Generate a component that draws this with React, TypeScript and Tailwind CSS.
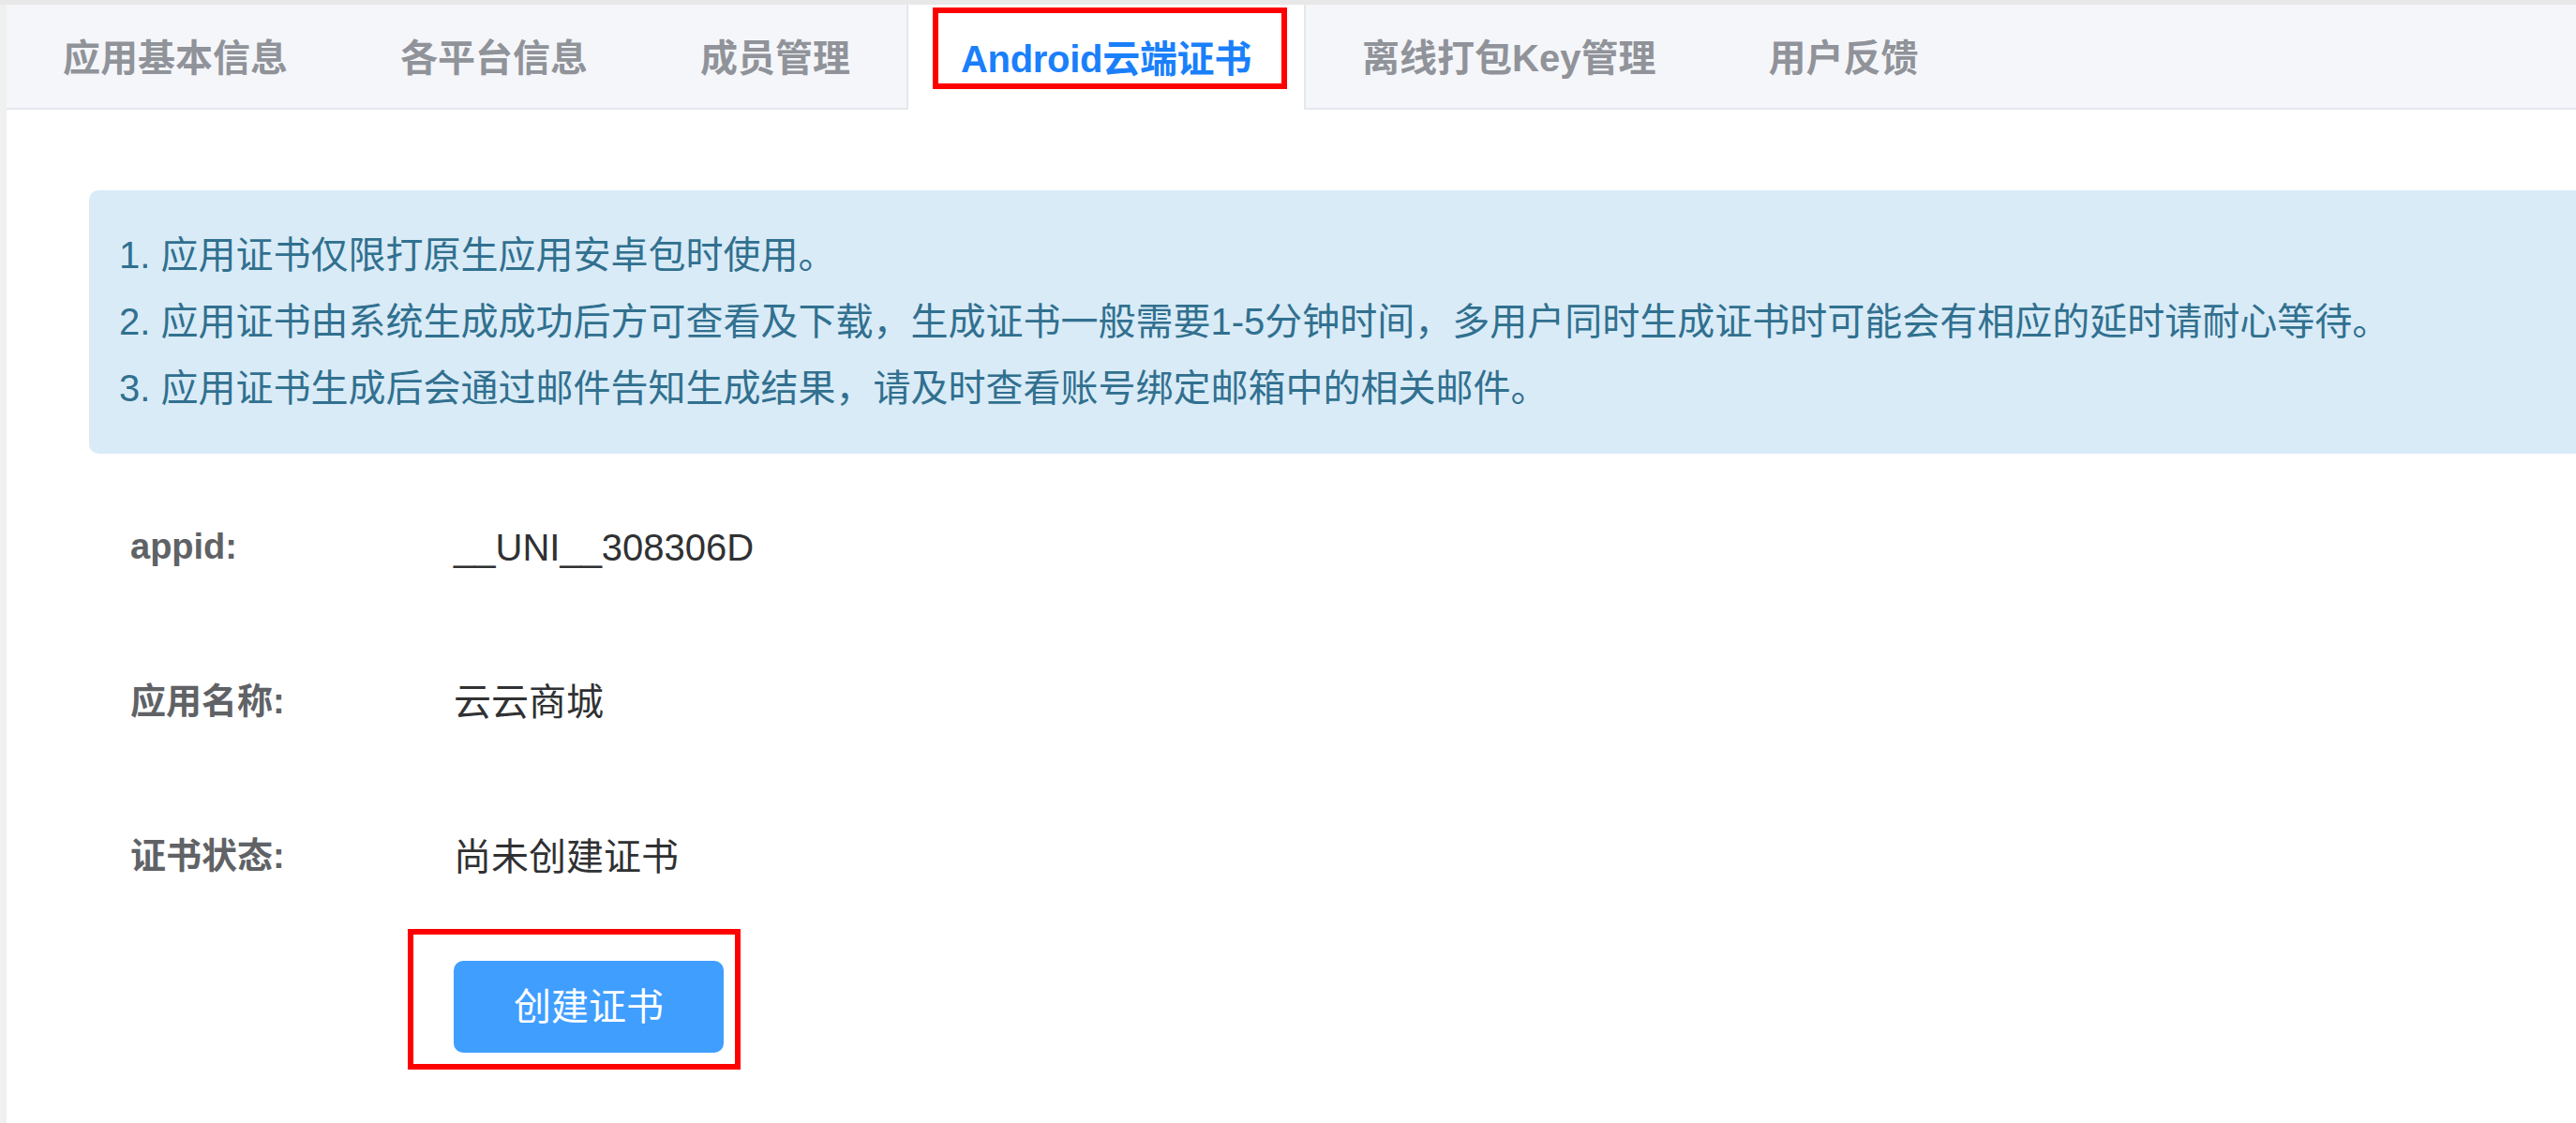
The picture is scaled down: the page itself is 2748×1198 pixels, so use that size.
const tabs = ['应用基本信息', '各平台信息', '成员管理', 'Android云端证书', '离线打包Key管理', '用户反馈']
const activeTab = 'Android云端证书'

const notes = [
  '1. 应用证书仅限打原生应用安卓包时使用。',
  '2. 应用证书由系统生成成功后方可查看及下载，生成证书一般需要1-5分钟时间，多用户同时生成证书时可能会有相应的延时请耐心等待。',
  '3. 应用证书生成后会通过邮件告知生成结果，请及时查看账号绑定邮箱中的相关邮件。',
]

const rows = [
  { label: 'appid:', value: '__UNI__308306D' },
  { label: '应用名称:', value: '云云商城' },
  { label: '证书状态:', value: '尚未创建证书' },
]

export default function App() {
  return (
    <div className="min-h-screen w-full overflow-hidden bg-[#f0f0f0] font-['Liberation_Sans','Noto_Sans_CJK_SC',sans-serif]">
      <div className="h-[5px] bg-[#e8e8e8]" />
      <div className="ml-[7px] min-h-[1193px] bg-white">
        {/* tab header */}
        <nav className="flex h-[112px] border-b-[2px] border-[#e4e7ed] bg-[#f5f6fa]">
          {tabs.map((tab) =>
            tab === activeTab ? (
              <div
                key={tab}
                className="relative -mb-[2px] flex h-[112px] items-center border-x-[2px] border-[#e4e7ed] bg-white px-[56px] pt-[4px] text-[40px] font-semibold tracking-[-0.3px] text-[#1a7ffb]"
              >
                {tab}
                <span className="pointer-events-none absolute top-[3px] left-[26px] h-[87px] w-[378px] border-[6px] border-[#ff0000]" />
              </div>
            ) : (
              <div
                key={tab}
                className="flex h-[110px] items-center px-[60px] pt-[4px] text-[40px] font-semibold text-[#909399]"
              >
                {tab}
              </div>
            ),
          )}
        </nav>

        <main className="pl-[88px]">
          <div className="mt-[86px] rounded-l-[10px] bg-[#d9ebf7] px-[32px] py-[34px] text-[40px] leading-[71px] text-[#31708f]">
            {notes.map((n) => (
              <p key={n} className="whitespace-nowrap">
                {n}
              </p>
            ))}
          </div>

          <div className="mt-[17px] pl-[44px]">
            {rows.map((r) => (
              <div key={r.label} className="flex h-[165px] items-center">
                <span className="w-[345px] text-[38px] font-bold text-[#606266]">{r.label}</span>
                <span className="text-[40px] text-[#303133]">{r.value}</span>
              </div>
            ))}
          </div>

          <div className="mt-[29px] pl-[389px]">
            <div className="relative inline-block">
              <button className="flex h-[98px] w-[288px] items-center justify-center rounded-[10px] bg-[#409eff] text-[40px] text-white">
                创建证书
              </button>
              <span className="pointer-events-none absolute -top-[34px] -right-[18px] -bottom-[18px] -left-[49px] border-[6px] border-[#ff0000]" />
            </div>
          </div>
        </main>
      </div>
    </div>
  )
}
